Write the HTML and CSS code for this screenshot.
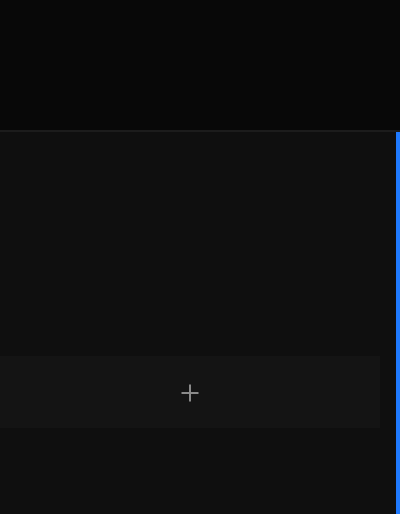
FILE: index.html
```html
<!DOCTYPE html>
<html>
<head>
<meta charset="utf-8">
<link rel="stylesheet" href="styles.css">
</head>
<body>
<header class="top"></header>
<main class="panel">
  <div class="content">
    <button class="add" aria-label="Add">
      <svg width="18" height="18" viewBox="0 0 18 18"><path d="M9 0.5v17M0.5 9h17" stroke="#8a8a8a" stroke-width="2" fill="none"/></svg>
    </button>
  </div>
  <div class="accent"></div>
</main>
</body>
</html>
```
FILE: styles.css
```css
html, body {
  margin: 0;
  height: 100%;
  background: #080808;
  font-family: "Liberation Sans", Arial, sans-serif;
}
body {
  display: flex;
  flex-direction: column;
}
.top {
  height: 130px;
  flex: none;
  background: #080808;
  border-bottom: 2px solid #1c1c1c;
}
.panel {
  flex: 1;
  display: flex;
  background: #0f0f0f;
}
.content {
  flex: 1;
  padding: 224px 16px 0 0;
}
.add {
  display: flex;
  align-items: center;
  justify-content: center;
  width: 100%;
  height: 72px;
  padding: 2px 0 0 0;
  border: none;
  background: #141414;
}
.accent {
  width: 4px;
  background: #1f7aff;
}
```
